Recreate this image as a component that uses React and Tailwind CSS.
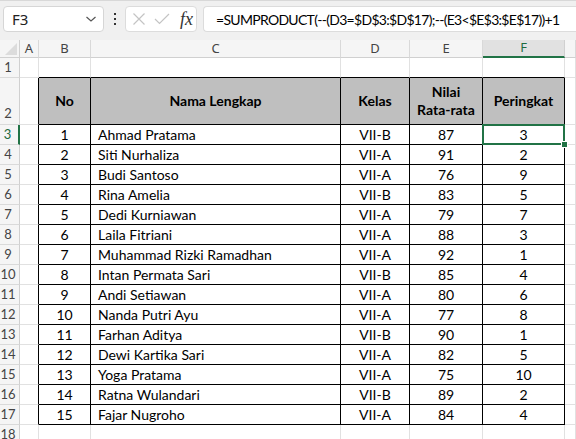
// Excel-like sheet: ranking table with SUMPRODUCT formula
import React from 'react';

const rows = [
    [1, 'Ahmad Pratama', 'VII-B', 87, 3],
    [2, 'Siti Nurhaliza', 'VII-A', 91, 2],
    [3, 'Budi Santoso', 'VII-A', 76, 9],
    [4, 'Rina Amelia', 'VII-B', 83, 5],
    [5, 'Dedi Kurniawan', 'VII-A', 79, 7],
    [6, 'Laila Fitriani', 'VII-A', 88, 3],
    [7, 'Muhammad Rizki Ramadhan', 'VII-A', 92, 1],
    [8, 'Intan Permata Sari', 'VII-B', 85, 4],
    [9, 'Andi Setiawan', 'VII-A', 80, 6],
    [10, 'Nanda Putri Ayu', 'VII-A', 77, 8],
    [11, 'Farhan Aditya', 'VII-B', 90, 1],
    [12, 'Dewi Kartika Sari', 'VII-A', 82, 5],
    [13, 'Yoga Pratama', 'VII-A', 75, 10],
    [14, 'Ratna Wulandari', 'VII-B', 89, 2],
    [15, 'Fajar Nugroho', 'VII-A', 84, 4],
];

const cellFont = { fontFamily: 'Lato, "Open Sans", sans-serif' };

function RowHead({ n, active, tall }) {
    return (
        <div
            className={`flex justify-center pr-[3px] text-[13px] bg-[#f5f5f5] border-b border-[#dadada] ${tall ? 'items-end pb-[1px]' : 'items-center'} ${active ? 'text-[#1d6b40] border-r-2 border-r-[#217346] bg-[#e3e3e3]' : 'text-[#444] border-r border-r-[#d0d0d0]'}`}
        >
            {n}
        </div>
    );
}

function Gap({ right = 'grid', bottom = 'grid' }) {
    const r = right === 'black' ? 'border-r-black' : 'border-r-[#e1e1e1]';
    const b = bottom === 'black' ? 'border-b-black' : 'border-b-[#e1e1e1]';
    return <div className={`border-r border-b ${r} ${b}`} />;
}

function TCell({ children, align = 'center', bold, head, className = '' }) {
    return (
        <div
            className={`flex items-center border-r border-b border-black text-[14px] text-black leading-[18px] ${align === 'left' ? 'justify-start pl-[7px]' : 'justify-center text-center'} ${bold ? 'font-bold' : ''} ${head ? 'bg-[#bfbfbf]' : 'bg-white'} ${className}`}
        >
            {children}
        </div>
    );
}

export default function App() {
    const formula = '=SUMPRODUCT(--(D3=$D$3:$D$17);--(E3<$E$3:$E$17))+1';
    const colLetters = ['A', 'B', 'C', 'D', 'E', 'F', ''];

    return (
        <div className="w-[576px] h-[439px] overflow-hidden flex flex-col bg-white" style={{ fontFamily: '"Noto Sans", "Open Sans", sans-serif' }}>
            {/* formula bar */}
            <div className="h-[40px] shrink-0 bg-[#f0f0f0] border-t border-[#d8d8d8] flex items-start pt-[5px] pl-[3px]">
                <div className="shrink-0 w-[101px] h-[26px] bg-white border border-[#d6d6d6] rounded-[4px] flex items-center justify-between pl-[8px] pr-[6px]">
                    <span className="text-[15px] text-[#222]">F3</span>
                    <svg width="12" height="8" viewBox="0 0 12 8" fill="none" stroke="#555" strokeWidth="1.2">
                        <path d="M1.5 2 L6 6 L10.5 2" />
                    </svg>
                </div>
                <div className="shrink-0 w-[21px] h-[26px] flex flex-col items-center justify-center gap-[3px]">
                    <span className="w-[2px] h-[2px] bg-[#333]" />
                    <span className="w-[2px] h-[2px] bg-[#333]" />
                    <span className="w-[2px] h-[2px] bg-[#333]" />
                </div>
                <div className="shrink-0 w-[72px] h-[26px] bg-white border border-[#dcdcdc] rounded-[4px] flex items-center pl-[6px] gap-[8px]">
                    <svg width="14" height="14" viewBox="0 0 14 14" fill="none" stroke="#c4c4c4" strokeWidth="1.2">
                        <path d="M1.5 1.5 L12.5 12.5 M12.5 1.5 L1.5 12.5" />
                    </svg>
                    <svg width="16" height="12" viewBox="0 0 16 12" fill="none" stroke="#c4c4c4" strokeWidth="1.2">
                        <path d="M1 6 L5.5 10.5 L15 1" />
                    </svg>
                    <span className="text-[18px] italic text-[#333] leading-none ml-[2px]" style={{ fontFamily: '"Liberation Serif", "DejaVu Serif", serif' }}>
                        fx
                    </span>
                </div>
                <div className="ml-[6px] flex-1 min-w-0 overflow-hidden h-[26px] bg-white border border-[#dcdcdc] rounded-l-[4px] border-r-0 flex items-center pl-[12px]">
                    <span className="text-[14px] tracking-[-0.7px] text-black whitespace-nowrap" style={{ fontFamily: 'Lato, "Noto Sans", sans-serif' }}>
                        {formula}
                    </span>
                </div>
            </div>

            {/* sheet grid */}
            <div
                className="flex-1 grid grid-cols-[20px_19px_52px_250px_69px_73px_82px_1fr] grid-rows-[18px_20px_47px_repeat(15,20px)_1fr]"
                style={cellFont}
            >
                {/* column headers */}
                <div className="relative bg-[#f5f5f5] border-r border-b border-[#d0d0d0]">
                    <div className="absolute right-[2px] bottom-[2px] w-0 h-0 border-l-[12px] border-l-transparent border-b-[12px] border-b-[#dcdcdc]" />
                </div>
                {colLetters.map((c, i) =>
                    c === 'F' ? (
                        <div
                            key={i}
                            className="flex items-center justify-center bg-[#e1e1e1] border-r border-[#d0d0d0] border-b-2 border-b-[#217346] text-[13px] text-[#1d6b40]"
                            style={{ fontFamily: '"Noto Sans", sans-serif' }}
                        >
                            {c}
                        </div>
                    ) : (
                        <div
                            key={i}
                            className="flex items-center justify-center bg-[#f5f5f5] border-r border-b border-[#d9d9d9] border-b-[#d0d0d0] text-[13px] text-[#444]"
                            style={{ fontFamily: '"Noto Sans", sans-serif' }}
                        >
                            {c}
                        </div>
                    )
                )}

                {/* row 1 */}
                <RowHead n={1} />
                <Gap />
                <Gap bottom="black" />
                <Gap bottom="black" />
                <Gap bottom="black" />
                <Gap bottom="black" />
                <Gap bottom="black" />
                <Gap />

                {/* row 2 header */}
                <RowHead n={2} tall />
                <Gap right="black" />
                <TCell bold head>No</TCell>
                <TCell bold head>Nama Lengkap</TCell>
                <TCell bold head>Kelas</TCell>
                <TCell bold head>
                    <span>
                        Nilai
                        <br />
                        Rata-rata
                    </span>
                </TCell>
                <TCell bold head>Peringkat</TCell>
                <Gap />

                {/* data rows */}
                {rows.map((r, i) => (
                    <React.Fragment key={r[0]}>
                        <RowHead n={i + 3} active={i === 0} />
                        <Gap right="black" />
                        <TCell>{r[0]}</TCell>
                        <TCell align="left">{r[1]}</TCell>
                        <TCell>{r[2]}</TCell>
                        <TCell>{r[3]}</TCell>
                        {i === 0 ? (
                            <TCell className="relative">
                                {r[4]}
                                <div className="absolute -top-[1px] -left-[1px] -right-[1px] -bottom-[1px] border-2 border-[#217346]" />
                                <div className="absolute -right-[4px] -bottom-[4px] w-[7px] h-[7px] bg-[#217346] border border-white" />
                            </TCell>
                        ) : (
                            <TCell>{r[4]}</TCell>
                        )}
                        <Gap />
                    </React.Fragment>
                ))}

                {/* row 18 */}
                <RowHead n={18} />
                <Gap />
                <Gap />
                <Gap />
                <Gap />
                <Gap />
                <Gap />
                <Gap />
            </div>
        </div>
    );
}
